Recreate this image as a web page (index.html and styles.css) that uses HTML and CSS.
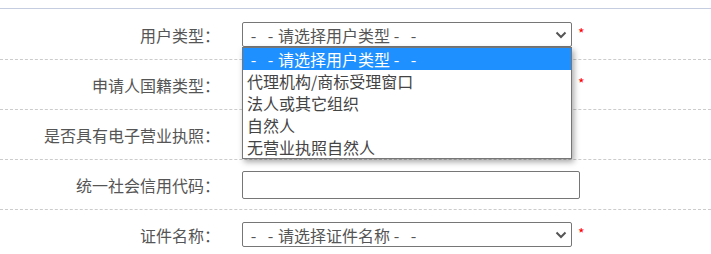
FILE: index.html
```html
<!DOCTYPE html>
<html lang="zh-CN">
<head>
<meta charset="UTF-8">
<title>用户信息</title>
<link rel="stylesheet" href="styles.css">
</head>
<body>

<div class="form">
  <div class="row">
    <label class="label">用户类型：</label>
    <div class="field">
      <div class="select">
        <span><span class="dash">-</span><span class="dash">-</span>请选择用户类型<span class="dash">-</span><span class="dash">-</span></span>
        <svg class="arrow" width="12" height="8" viewBox="0 0 12 8"><path d="M1.5 1.5 L6 6 L10.5 1.5" fill="none" stroke="#555" stroke-width="2"/></svg>
      </div>
      <span class="req">*</span>
      <!-- open option list -->
      <div class="options">
        <div class="option selected"><span class="dash">-</span><span class="dash">-</span>请选择用户类型<span class="dash">-</span><span class="dash">-</span></div>
        <div class="option">代理机构/商标受理窗口</div>
        <div class="option">法人或其它组织</div>
        <div class="option">自然人</div>
        <div class="option">无营业执照自然人</div>
      </div>
    </div>
  </div>

  <div class="row">
    <label class="label">申请人国籍类型：</label>
    <div class="field">
      <div class="select"></div>
      <span class="req">*</span>
    </div>
  </div>

  <div class="row">
    <label class="label">是否具有电子营业执照：</label>
    <div class="field">
      <div class="select"></div>
    </div>
  </div>

  <div class="row">
    <label class="label">统一社会信用代码：</label>
    <div class="field">
      <input type="text" class="text-input">
    </div>
  </div>

  <div class="row">
    <label class="label">证件名称：</label>
    <div class="field">
      <div class="select">
        <span><span class="dash">-</span><span class="dash">-</span>请选择证件名称<span class="dash">-</span><span class="dash">-</span></span>
        <svg class="arrow" width="12" height="8" viewBox="0 0 12 8"><path d="M1.5 1.5 L6 6 L10.5 1.5" fill="none" stroke="#555" stroke-width="2"/></svg>
      </div>
      <span class="req">*</span>
    </div>
  </div>
</div>

</body>
</html>
```

FILE: styles.css
```css
body {
  margin: 0;
  padding: 0;
  font-family: "Noto Sans CJK SC", "Liberation Sans", sans-serif;
  background-color: #fff;
}
.form {
  margin-top: 8px;
  border-top: 1px solid #c5cde0;
  padding-top: 1px;
}
.row {
  display: flex;
  align-items: center;
  height: 49px;
  border-bottom: 1px dashed #ccc;
}
.label {
  width: 220px;
  text-align: right;
  font-size: 16px;
  color: #555;
}
.field {
  position: relative;
  display: flex;
  align-items: center;
  margin-left: 22px;
}
.select {
  width: 330px;
  height: 25px;
  box-sizing: border-box;
  border: 1px solid #767676;
  border-radius: 2px;
  display: flex;
  align-items: center;
  justify-content: space-between;
  padding: 0 4px 0 4px;
  font-size: 16px;
  color: #555;
  background-color: #fff;
  white-space: nowrap;
}
.dash {
  display: inline-block;
  width: 13px;
  text-align: center;
}
.dash:first-child {
  margin-right: 4px;
}
.dash + .dash {
  margin-right: 1px;
}
.dash:nth-last-child(2) {
  margin-right: 4px;
}
.dash:last-child {
  margin-right: 0;
}
.req {
  color: #f00;
  font-size: 14px;
  margin-left: 6px;
  margin-top: -4px;
}
.text-input {
  width: 338px;
  height: 28px;
  box-sizing: border-box;
  border: 1px solid #767676;
  border-radius: 2px;
  margin: 0;
  margin-top: 1px;
  font-size: 16px;
}
.options {
  position: absolute;
  left: 0;
  top: 25px;
  width: 330px;
  box-sizing: border-box;
  border: 1px solid #767676;
  background-color: #fff;
  box-shadow: 2px 3px 6px rgba(0, 0, 0, 0.35);
  z-index: 10;
}
.option {
  height: 22px;
  line-height: 22px;
  padding-left: 4px;
  font-size: 16px;
  color: #444;
  white-space: nowrap;
}
.option.selected {
  background-color: #1e90ff;
  color: #fff;
}
```
